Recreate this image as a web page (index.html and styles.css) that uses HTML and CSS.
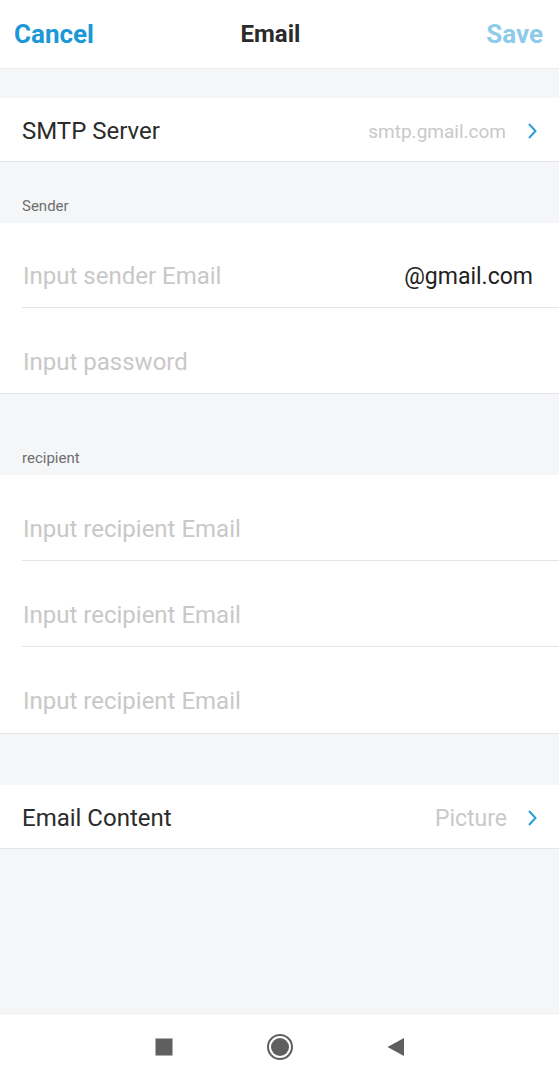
FILE: index.html
```html
<!DOCTYPE html>
<html lang="en">

<head>
    <meta charset="UTF-8">
    <meta name="viewport" content="width=device-width, initial-scale=1.0">
    <title>Email</title>
    <link rel="stylesheet" href="styles.css">
</head>

<body>
    <div class="screen">
        <header class="top-bar">
            <span class="cancel">Cancel</span>
            <h1>Email</h1>
            <span class="save">Save</span>
        </header>

        <div class="spacer small"></div>

        <div class="group">
            <div class="row link-row">
                <span class="label">SMTP Server</span>
                <span class="value">smtp.gmail.com</span>
                <svg class="chevron" viewBox="0 0 12 18" width="12" height="18">
                    <path d="M3 2 L9.5 9 L3 16" fill="none" stroke="#2a9fd6" stroke-width="2" />
                </svg>
            </div>
        </div>

        <div class="section-title">Sender</div>

        <div class="group">
            <div class="row input-row">
                <input type="text" placeholder="Input sender Email">
                <span class="suffix">@gmail.com</span>
            </div>
            <div class="row input-row">
                <input type="password" placeholder="Input password">
            </div>
        </div>

        <div class="section-title tall">recipient</div>

        <div class="group">
            <div class="row input-row wide">
                <input type="text" placeholder="Input recipient Email">
            </div>
            <div class="row input-row wide">
                <input type="text" placeholder="Input recipient Email">
            </div>
            <div class="row input-row wide">
                <input type="text" placeholder="Input recipient Email">
            </div>
        </div>

        <div class="spacer"></div>

        <div class="group">
            <div class="row link-row">
                <span class="label">Email Content</span>
                <span class="value big">Picture</span>
                <svg class="chevron" viewBox="0 0 12 18" width="12" height="18">
                    <path d="M3 2 L9.5 9 L3 16" fill="none" stroke="#2a9fd6" stroke-width="2" />
                </svg>
            </div>
        </div>

        <div class="fill"></div>

        <nav class="nav-bar">
            <svg viewBox="0 0 18 18" width="18" height="18">
                <rect x="0.5" y="0.5" width="17" height="17" fill="#5f5f5f" />
            </svg>
            <svg viewBox="0 0 28 28" width="28" height="28">
                <circle cx="14" cy="14" r="12" fill="none" stroke="#5f5f5f" stroke-width="2" />
                <circle cx="14" cy="14" r="9" fill="#5f5f5f" />
            </svg>
            <svg viewBox="0 0 18 20" width="18" height="20">
                <path d="M0.5 10 L17 1 L17 19 Z" fill="#5f5f5f" />
            </svg>
        </nav>
    </div>
</body>

</html>
```

FILE: styles.css
```css
* {
    margin: 0;
    padding: 0;
    box-sizing: border-box;
}

body {
    background: #f5f6f8;
    font-family: Roboto, "Noto Sans", Arial, sans-serif;
    color: #2b2b2b;
}

.screen {
    width: 559px;
    height: 1080px;
    display: flex;
    flex-direction: column;
    overflow: hidden;
}

.top-bar {
    height: 69px;
    background: #fff;
    border-bottom: 1px solid #eceef0;
    display: grid;
    grid-template-columns: 1fr auto 1fr;
    align-items: center;
    padding: 0 16px 0 14px;
}

.top-bar h1 {
    font-size: 24px;
    font-weight: bold;
    color: #2b2b2b;
    margin-right: 16px;
}

.cancel,
.save {
    font-size: 26px;
    font-weight: bold;
    color: #1b98d5;
}

.save {
    color: #8ecbea;
    justify-self: end;
}

.spacer {
    height: 51px;
}

.spacer.small {
    height: 29px;
}

.group {
    background: #fff;
    border-bottom: 1px solid #e4e5e7;
}

.row {
    display: flex;
    align-items: center;
}

.link-row {
    height: 63px;
    padding: 3px 21px 0 22px;
}

.link-row .label {
    font-size: 24px;
    flex: 1;
}

.link-row .value {
    font-size: 19px;
    color: #c9c9c9;
    margin-right: 20px;
}

.link-row .value.big {
    font-size: 23px;
    margin-right: 19px;
}

.chevron {
    display: block;
}

.section-title {
    height: 61px;
    padding: 0 22px 8px;
    display: flex;
    align-items: flex-end;
    font-size: 15px;
    color: #6e6e6e;
}

.section-title.tall {
    height: 81px;
}

.input-row {
    height: 85px;
    margin-left: 22px;
    padding: 22px 26px 0 0;
    border-bottom: 1px solid #e4e5e7;
}

.input-row.wide {
    height: 86px;
}

.input-row:last-child {
    border-bottom: none;
}

.input-row input {
    flex: 1;
    min-width: 0;
    border: none;
    outline: none;
    background: transparent;
    font-family: inherit;
    font-size: 24px;
    color: #2b2b2b;
    padding-left: 1px;
}

.input-row input::placeholder {
    color: #c8c8c8;
}

.suffix {
    font-size: 23px;
    color: #222;
}

.fill {
    flex: 1;
}

.nav-bar {
    height: 67px;
    background: #fff;
    border-top: 1px solid #eceef0;
    display: flex;
    justify-content: center;
    align-items: center;
    gap: 93px;
}
```
